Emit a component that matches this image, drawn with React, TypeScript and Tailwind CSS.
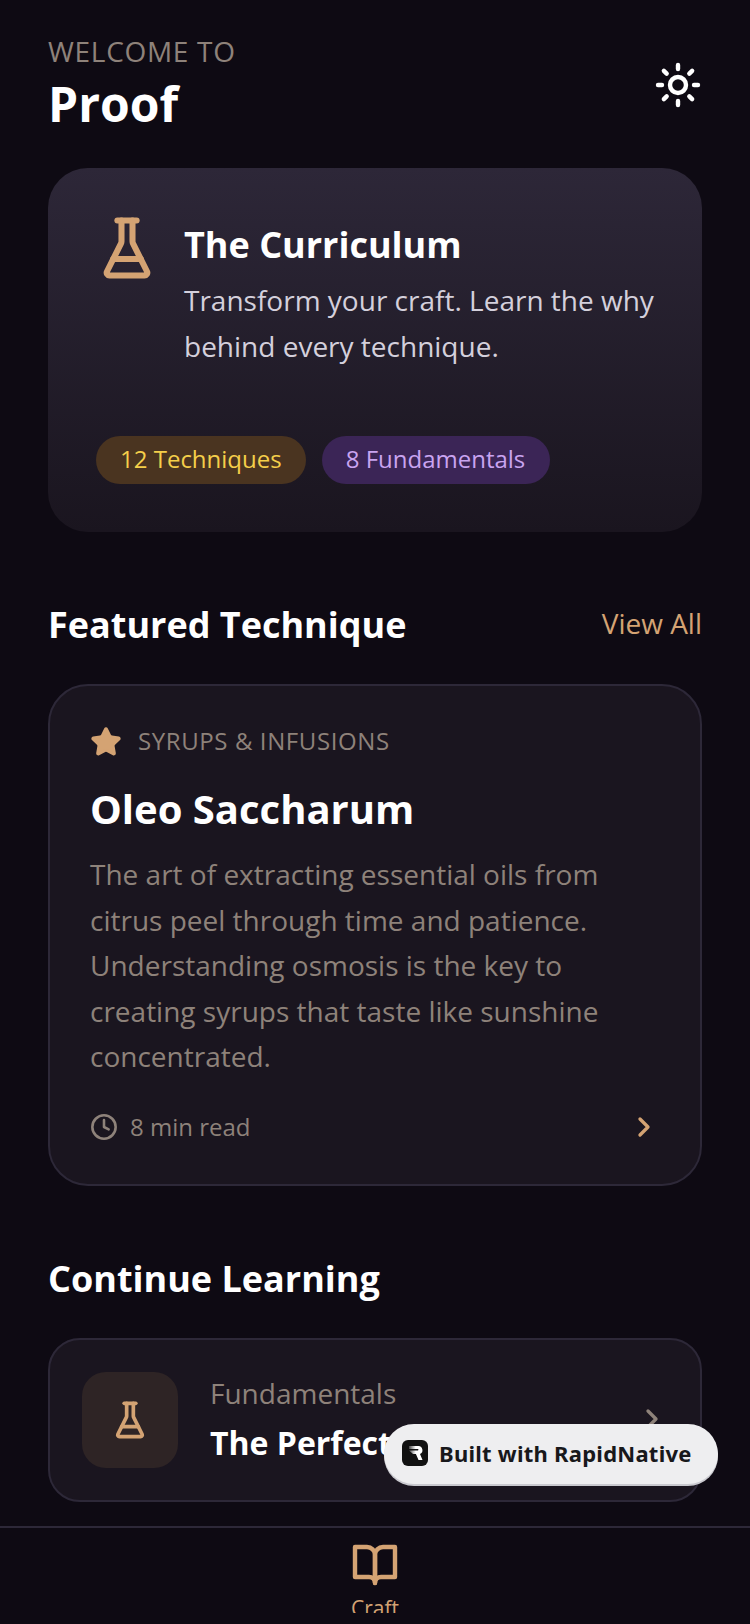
import { ChevronRight, Clock, Star, Sun } from 'lucide-react';

function Flask({ size, strokeWidth = 2.2 }: { size: number; strokeWidth?: number }) {
  return (
    <svg width={size} height={size} viewBox="0 0 24 24" fill="none" stroke="#d4a373" strokeWidth={strokeWidth} strokeLinecap="round" strokeLinejoin="round" className="shrink-0">
      <path d="M10 2v7.527a2 2 0 0 1-.211.896L4.72 20.55a1 1 0 0 0 .9 1.45h12.76a1 1 0 0 0 .9-1.45l-5.069-10.127A2 2 0 0 1 14 9.527V2" />
      <path d="M8.5 2h7" />
      <path d="M7 16h10" />
    </svg>
  );
}

function Book() {
  return (
    <svg width="48" height="48" viewBox="0 0 24 24" fill="none" stroke="#d4a373" strokeWidth="2.2" strokeLinecap="round" strokeLinejoin="round">
      <path d="M2 3h6a4 4 0 0 1 4 4v14a3 3 0 0 0-3-3H2z" />
      <path d="M22 3h-6a4 4 0 0 0-4 4v14a3 3 0 0 1 3-3h7z" />
    </svg>
  );
}

export default function App() {
  return (
    <div className="relative w-[750px] h-[1624px] overflow-hidden flex flex-col bg-[#0e0a13] font-['Open_Sans',sans-serif]">
      <div className="flex-1 min-h-0 overflow-hidden px-12">
        {/* Header */}
        <div className="flex items-center justify-between pt-[31px]">
          <div>
            <p className="text-[28px] leading-[40px] tracking-[0.7px] text-[#8e827a]">WELCOME TO</p>
            <h1 className="mt-[1px] text-[48px] leading-[64px] font-bold text-white">Proof</h1>
          </div>
          <Sun size={48} strokeWidth={2.2} className="text-white mt-[2px]" />
        </div>

        {/* Curriculum */}
        <div className="mt-[32px] h-[364px] rounded-[40px] bg-gradient-to-b from-[#2d2738] to-[#1a151f] pt-[46px] pl-[48px] pr-[40px]">
          <div className="flex">
            <div className="-ml-[2px] mt-[1px] mr-[-1px]">
              <Flask size={66} />
            </div>
            <div className="ml-[25px] pt-[7px]">
              <h2 className="text-[36px] leading-[48px] font-bold text-white">The Curriculum</h2>
              <p className="mt-[8px] text-[28px] leading-[46px] text-[#d4d0dc]">Transform your craft. Learn the why behind every technique.</p>
            </div>
          </div>
          <div className="mt-[67px] flex gap-4">
            <span className="h-[48px] px-6 pb-[2px] flex items-center rounded-full bg-[#4a3420] text-[24px] text-[#f5cf4a]">12 Techniques</span>
            <span className="h-[48px] pl-6 pr-[25px] pb-[2px] flex items-center rounded-full bg-[#3b2556] text-[24px] text-[#c9a4f0]">8 Fundamentals</span>
          </div>
        </div>

        {/* Featured */}
        <div className="mt-[68px] flex items-center justify-between h-[50px]">
          <h2 className="text-[36px] leading-[50px] font-bold text-white">Featured Technique</h2>
          <span className="text-[28px] pb-[4px] text-[#d4a373]">View All</span>
        </div>
        <div className="mt-[34px] h-[502px] rounded-[40px] border-2 border-[#2d2838] bg-[#1a151f] pt-[38px] px-[40px]">
          <div className="flex items-center gap-4 h-[36px]">
            <Star size={32} fill="#d4a373" className="text-[#d4a373]" />
            <span className="text-[24px] pb-[2px] tracking-[0.6px] text-[#8e827a]">SYRUPS &amp; INFUSIONS</span>
          </div>
          <h3 className="mt-[21px] text-[40px] leading-[56px] font-bold text-white">Oleo Saccharum</h3>
          <p className="mt-[15px] text-[28px] leading-[45.6px] text-[#8e827a]">The art of extracting essential oils from citrus peel through time and patience. Understanding osmosis is the key to creating syrups that taste like sunshine concentrated.</p>
          <div className="mt-[27px] flex items-center h-[40px]">
            <Clock size={28} strokeWidth={2.2} className="text-[#8e827a]" />
            <span className="ml-[12px] text-[24px] text-[#8e827a]">8 min read</span>
            <ChevronRight size={32} strokeWidth={2.5} className="ml-auto text-[#d4a373]" />
          </div>
        </div>

        {/* Continue */}
        <h2 className="mt-[68px] text-[36px] leading-[50px] font-bold text-white">Continue Learning</h2>
        <div className="mt-[34px] h-[164px] rounded-[32px] border-2 border-[#2d2838] bg-[#1a151f] flex items-center px-[32px]">
          <div className="w-[96px] h-[96px] rounded-[24px] bg-[#2e2425] flex items-center justify-center shrink-0">
            <Flask size={40} />
          </div>
          <div className="ml-[32px] flex-1 pb-[2px]">
            <p className="text-[28px] leading-[40px] text-[#8e827a]">Fundamentals</p>
            <p className="mt-[8px] text-[32px] leading-[44px] font-bold text-white">The Perfect Sour</p>
          </div>
          <ChevronRight size={32} strokeWidth={2.5} className="mb-[2px] text-[#8e827a]" />
        </div>
      </div>

      {/* Tab bar */}
      <div className="h-[98px] shrink-0 border-t-2 border-[#2d2838] bg-[#0e0a13] flex flex-col items-center pt-[13px]">
        <Book />
        <div className="mt-[5px] h-[19px] overflow-hidden">
          <span className="block text-[21px] leading-[28px] text-[#d4a373]">Craft</span>
        </div>
      </div>

      {/* Badge */}
      <div className="absolute left-[384px] top-[1424px] w-[334px] h-[60px] rounded-full bg-[#eeeef0] flex items-center gap-[11px] pl-[18px] pb-[2px] shadow-[0_2px_0_#c9c9cf] font-['Noto_Sans',sans-serif]">
        <svg width="26" height="26" viewBox="0 0 26 26" className="shrink-0">
          <defs>
            <linearGradient id="rn" x1="0" y1="0" x2="1" y2="0">
              <stop offset="0" stopColor="#444" />
              <stop offset="0.5" stopColor="#fff" />
            </linearGradient>
          </defs>
          <rect width="26" height="26" rx="6" fill="#111" />
          <path d="M7 6h9.5a4.2 4.2 0 0 1 1.5 8l2.5 6h-4l-2.6-6H11l-4-3.5h9a0.9 0.9 0 0 0 0-1.5H7z" fill="url(#rn)" />
        </svg>
        <span className="text-[22px] font-bold tracking-[0.25px] text-[#18181b] whitespace-nowrap">Built with RapidNative</span>
      </div>
    </div>
  );
}
